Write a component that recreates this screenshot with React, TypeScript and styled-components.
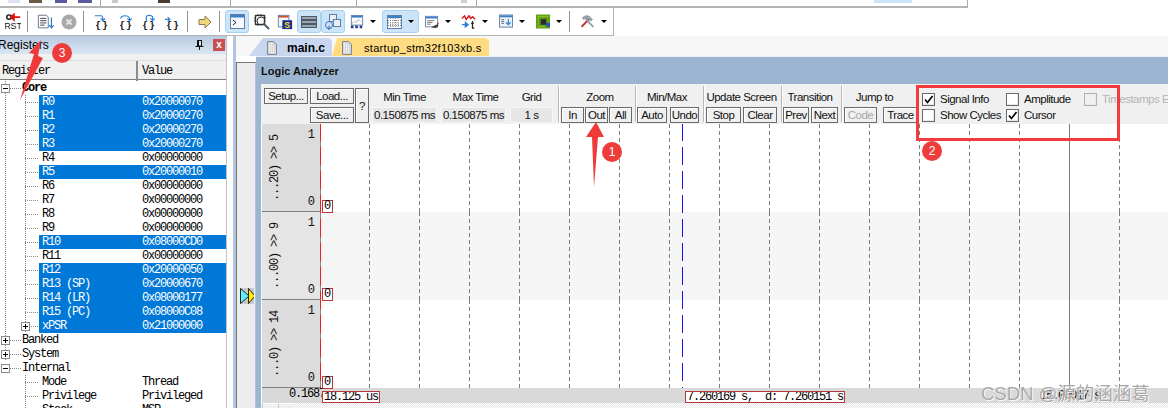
import styled, { createGlobalStyle } from "styled-components";

const GlobalStyle = createGlobalStyle`
  html, body {
    margin: 0;
    background: #fff;
  }
`;

const ui = `"Liberation Sans", Arial, sans-serif`;
const mono = `"Liberation Mono", "Courier New", monospace`;

const Page = styled.div`
  position: relative;
  width: 1168px;
  height: 408px;
  overflow: hidden;
  display: flex;
  flex-direction: column;
  background: #fff;
  font-family: ${ui};
`;

/* ---------- top strip: leftovers of the toolbar above ---------- */

const TopStrip = styled.div`
  height: 6px;
  width: 967px;
  flex: none;
  display: flex;
  border-right: 1px solid #aaa;
  border-bottom: 2px solid #b4b4b4;
`;

const Stub = styled.div<{ $ml: number; $w: number; $c: string }>`
  margin-left: ${(p) => p.$ml}px;
  width: ${(p) => p.$w}px;
  height: 3px;
  background: ${(p) => p.$c};
`;

const StubLine = styled.div<{ $ml: number }>`
  margin-left: ${(p) => p.$ml}px;
  width: 1px;
  background: #aaa;
`;

/* ---------- debug toolbar ---------- */

const ToolBar = styled.div`
  width: 613px;
  height: 27px;
  flex: none;
  box-sizing: content-box;
  display: flex;
  align-items: center;
  border-right: 1px solid #b4b4b4;
  border-bottom: 1px solid #b4b4b4;
`;

const Tool = styled.div<{ $w: number; $ml: number; $on?: boolean }>`
  width: ${(p) => p.$w}px;
  margin-left: ${(p) => p.$ml}px;
  height: 23px;
  box-sizing: border-box;
  flex: none;
  display: flex;
  align-items: center;
  justify-content: ${(p) => (p.$on ? "center" : "flex-start")};
  gap: 6px;
  border-radius: 3px;
  background: ${(p) => (p.$on ? "#cce4f7" : "transparent")};
  border: 1px solid ${(p) => (p.$on ? "#a8d2f2" : "transparent")};
`;

const ToolSep = styled.div<{ $ml: number }>`
  width: 1px;
  height: 21px;
  flex: none;
  margin-left: ${(p) => p.$ml}px;
  background: #8e8e8e;
`;

const Caret = styled.span`
  width: 0;
  height: 0;
  flex: none;
  border-left: 3px solid transparent;
  border-right: 3px solid transparent;
  border-top: 3px solid #000;
`;

const Braces = ({ arrow }: { arrow: string }) => (
  <svg width="18" height="18" viewBox="0 0 18 18">
    <text x="9" y="16" textAnchor="middle" fontFamily={mono} fontWeight="700" fontSize="11" letterSpacing="1" fill="#111">
      {"{}"}
    </text>
    <path d={arrow} fill="none" stroke="#2f7fd6" strokeWidth="1.3" />
  </svg>
);

const Win = ({ children }: { children?: React.ReactNode }) => (
  <svg width="17" height="17" viewBox="0 0 17 17">
    <rect x="1.5" y="1.5" width="14" height="14" fill="#f5f8fc" stroke="#5b7fa8" />
    <rect x="2" y="2" width="13" height="2.5" fill="#3f7fc8" />
    {children}
  </svg>
);

const CheckMark = () => (
  <svg width="11" height="11" viewBox="0 0 11 11">
    <path d="M2 5.500l2.500 3 5-6.500" fill="none" stroke="#000" strokeWidth="1.700" />
  </svg>
);

/* ---------- main split ---------- */

const Main = styled.div`
  flex: 1;
  min-height: 0;
  display: flex;
`;

const RegisterPanel = styled.div`
  width: 226px;
  flex: none;
  display: flex;
  flex-direction: column;
  overflow: hidden;
  border-right: 1px solid #c4c4c4;
`;

const PanelHead = styled.div`
  height: 18px;
  flex: none;
  display: flex;
  align-items: center;
  background: linear-gradient(#b7cadf, #dbe6f2);
  font-size: 12px;
  color: #000;
`;

const PanelTitle = styled.span`
  margin-left: -2px;
  flex: 1;
`;

const CloseBtn = styled.span`
  width: 12px;
  height: 12px;
  margin: 0 1px 0 9px;
  background: #c75050;
  color: #fff;
  font-size: 10px;
  font-weight: 700;
  line-height: 11px;
  text-align: center;
`;

const PanelGap = styled.div`
  height: 6px;
  flex: none;
  background: #f0f0f0;
`;

const TableHead = styled.div`
  height: 20px;
  flex: none;
  display: grid;
  grid-template-columns: 136px 1fr;
  background: #f0f0f0;
  border-top: 1px solid #dcdcdc;
  border-bottom: 1px solid #7d7d7d;
  box-sizing: border-box;
  font-family: ${mono};
  font-size: 12px;
  letter-spacing: -1.2px;
`;

const HeadCell = styled.div`
  padding-left: 2px;
  line-height: 20px;
  & + & {
    border-left: 2px solid #8c8c8c;
    padding-left: 4px;
  }
`;

const Tree = styled.div`
  flex: 1;
  padding-top: 1px;
  min-height: 0;
  font-family: ${mono};
  font-size: 12px;
  letter-spacing: -1.2px;
`;

const dotV = (x: number) =>
  `repeating-linear-gradient(#8a8a8a 0 1px, transparent 1px 2px) ${x}px 0 / 1px 100% no-repeat`;
const dotH = (x: number, w: number) =>
  `repeating-linear-gradient(90deg, #8a8a8a 0 1px, transparent 1px 2px) ${x}px 7px / ${w}px 1px no-repeat`;

const TreeLine = styled.div`
  height: 14px;
  display: flex;
  line-height: 15px;
`;

const Indent = styled.div<{ $level: number; $rail?: boolean }>`
  position: relative;
  flex: none;
  width: ${(p) => (p.$level ? 39 : 22)}px;
  background: ${(p) =>
    [
      p.$level ? dotV(25) : "",
      p.$level ? dotH(25, 14) : dotH(8, 14),
      p.$rail ? dotV(5) : "",
    ]
      .filter(Boolean)
      .join(", ")};
`;

const Expander = styled.span<{ $level: number; $open?: boolean }>`
  position: absolute;
  top: 3px;
  left: ${(p) => (p.$level ? 21 : 1)}px;
  width: 7px;
  height: 7px;
  border: 1px solid #8a8a8a;
  background: #fff;
  &::before {
    content: "";
    position: absolute;
    left: 1px;
    right: 1px;
    top: 3px;
    height: 1px;
    background: #000;
  }
  &::after {
    content: "";
    display: ${(p) => (p.$open ? "none" : "block")};
    position: absolute;
    top: 1px;
    bottom: 1px;
    left: 3px;
    width: 1px;
    background: #000;
  }
`;

const TreeBody = styled.div<{ $sel?: boolean; $bold?: boolean; $wide?: boolean }>`
  flex: none;
  width: ${(p) => (p.$wide ? 204 : 187)}px;
  display: grid;
  grid-template-columns: ${(p) => (p.$wide ? "120px" : "100px")} 1fr;
  box-sizing: border-box;
  padding-left: ${(p) => (p.$wide ? 0 : 3)}px;
  background: ${(p) => (p.$sel ? "#0078d7" : "transparent")};
  color: ${(p) => (p.$sel ? "#fff" : "#000")};
  font-weight: ${(p) => (p.$bold ? 700 : 400)};
  white-space: pre;
`;

/* ---------- workspace ---------- */

const PanelSlit = styled.div`
  width: 9px;
  flex: none;
  box-sizing: border-box;
  background: #fff;
  border-right: 3px solid #b4c4de;
`;

const Workspace = styled.div`
  flex: 1;
  min-width: 0;
  display: flex;
  flex-direction: column;
`;

const TabStrip = styled.div`
  height: 20px;
  flex: none;
  display: flex;
  align-items: flex-end;
  padding-left: 13px;
  background: #f7f7f7;
`;

const Tab = styled.div<{ $bg: string; $w: number; $bold?: boolean; $pad: number; $lead: number; $slant: number }>`
  width: ${(p) => p.$w}px;
  height: 18px;
  box-sizing: border-box;
  flex: none;
  display: flex;
  align-items: center;
  gap: ${(p) => p.$pad}px;
  padding: 2px 0 0 ${(p) => p.$lead}px;
  background: ${(p) => p.$bg};
  clip-path: polygon(0 100%, ${(p) => p.$slant}px 0, calc(100% - 3px) 0, 100% 3px, 100% 100%);
  font-size: ${(p) => (p.$bold ? 12 : 11)}px;
  font-weight: ${(p) => (p.$bold ? 700 : 400)};
  letter-spacing: ${(p) => (p.$bold ? 0 : 0.3)}px;
`;

const DocIcon = () => (
  <svg width="12" height="14" viewBox="0 0 12 14">
    <path d="M1.5 .5h6l3 3v10h-9z" fill="#d8d8d8" stroke="#7d8796" />
    <path d="M3 3h3M3 5h5M3 7h5M3 9h5M3 11h5" stroke="#fff" strokeDasharray="1 1" />
  </svg>
);

const Desk = styled.div`
  flex: 1;
  min-height: 0;
  display: flex;
`;

const Gutter = styled.div`
  width: 20px;
  flex: none;
  box-sizing: border-box;
  margin-top: 6px;
  padding-top: 225px;
  padding-left: 3px;
  background: #ececec;
  border-top: 1px solid #777;
  border-left: 1px solid #777;
  border-right: 1px solid #b4c4de;
`;

const Marker = styled.div`
  width: 14px;
  height: 16px;
  background: #c8c8c8;
  overflow: hidden;
`;

const Analyzer = styled.div`
  flex: 1;
  min-width: 0;
  display: flex;
  flex-direction: column;
  background: #9cb5d0;
  border-top: 1px solid #e8eef5;
  padding-left: 5px;
`;

const TitleBar = styled.div`
  height: 27px;
  flex: none;
  display: flex;
  align-items: center;
  font-size: 11px;
  font-weight: 700;
  color: #111;
`;

const Controls = styled.div`
  height: 40px;
  flex: none;
  display: flex;
  padding-left: 3px;
  background: #f0f0f0;
  white-space: nowrap;
  overflow: hidden;
  font-size: 11.5px;
  letter-spacing: -0.5px;
  color: #111;
`;

const Btn = styled.div<{ $w: number; $h?: number; $off?: boolean }>`
  width: ${(p) => p.$w}px;
  height: ${(p) => p.$h ?? 16}px;
  box-sizing: border-box;
  flex: none;
  display: flex;
  align-items: center;
  justify-content: center;
  border: 1px solid #6a6a6a;
  box-shadow: inset 1px 1px 0 #fff;
  background: #f0f0f0;
  color: ${(p) => (p.$off ? "#a8a8a8" : "#111")};
`;

const FileGroup = styled.div`
  margin-top: 4px;
  display: grid;
  grid-template-columns: 46px 45px 14px;
  grid-template-rows: 16px 16px;
  row-gap: 3px;
`;

const SetupBtn = styled(Btn)`
  grid-column: 1;
  grid-row: 1;
`;

const HelpBtn = styled(Btn)`
  grid-column: 3;
  grid-row: 1 / 3;
`;

const SaveBtn = styled(Btn)`
  grid-column: 2;
  grid-row: 2;
`;

const FieldsGap = styled.div`
  width: 3px;
  flex: none;
`;

const Field = styled.div<{ $w: number; $mr: number }>`
  width: ${(p) => p.$w}px;
  margin-right: ${(p) => p.$mr}px;
  flex: none;
  display: flex;
  flex-direction: column;
`;

const GroupLabel = styled.div<{ $nudge?: number }>`
  height: 23px;
  box-sizing: border-box;
  padding: 7px ${(p) => Math.max(0, -(p.$nudge ?? 0))}px 0 ${(p) => Math.max(0, p.$nudge ?? 0)}px;
  line-height: 13px;
  text-align: center;
`;

const FieldValue = styled.div`
  height: 16px;
  display: flex;
  align-items: center;
  justify-content: center;
  background: #e6e6e6;
  border: 1px solid #f6f6f6;
  box-sizing: border-box;
`;

const Groove = styled.div`
  width: 2px;
  height: 36px;
  flex: none;
  margin-top: 2px;
  border-left: 1px solid #b8b8b8;
  border-right: 1px solid #fff;
  box-sizing: border-box;
`;

const Group = styled.div<{ $w: number; $pl?: number }>`
  width: ${(p) => p.$w}px;
  box-sizing: border-box;
  padding-left: ${(p) => p.$pl ?? 0}px;
  flex: none;
  display: flex;
  flex-direction: column;
`;

const BtnRow = styled.div<{ $gap: number }>`
  display: flex;
  gap: ${(p) => p.$gap}px;
`;

const Options = styled.div`
  flex: none;
  margin: 7px 0 0 3px;
  display: grid;
  grid-template-columns: 84px 78px auto;
  grid-auto-rows: 16px;
`;

const Option = styled.div<{ $off?: boolean }>`
  display: flex;
  align-items: center;
  gap: 5px;
  color: ${(p) => (p.$off ? "#b4b4b4" : "#111")};
`;

const Check = styled.span<{ $off?: boolean }>`
  width: 13px;
  height: 13px;
  flex: none;
  box-sizing: border-box;
  display: flex;
  border: 1px solid ${(p) => (p.$off ? "#b0b0b0" : "#6a6a6a")};
  background: ${(p) => (p.$off ? "#f0f0f0" : "#fff")};
  box-shadow: inset -1px -1px 0 #e8e8e8;
`;

/* ---------- signal rows ---------- */

const Signals = styled.div`
  flex: 1;
  min-height: 0;
  display: flex;
  flex-direction: column;
  background: #fff;
`;

const SignalRow = styled.div<{ $h: number; $alt?: boolean }>`
  height: ${(p) => p.$h}px;
  flex: none;
  display: flex;
  position: relative;
  background: ${(p) => (p.$alt ? "#f5f5f5" : "#fff")};
`;

const LabelCell = styled.div<{ $alt?: boolean }>`
  width: 58px;
  margin-left: 1px;
  flex: none;
  box-sizing: border-box;
  display: flex;
  justify-content: space-between;
  padding: 4px 5px 2px 6px;
  background: ${(p) => (p.$alt ? "#e5e5e5" : "#dcdcdc")};
  border-bottom: 1px solid #808080;
  color: #111;
`;

const SigName = styled.div`
  writing-mode: vertical-rl;
  transform: rotate(180deg);
  align-self: center;
  font-family: ${mono};
  font-size: 12px;
  letter-spacing: -1.200px;
  white-space: pre;
`;

const Scale = styled.div`
  display: flex;
  flex-direction: column;
  justify-content: space-between;
  font-family: ${mono};
  font-size: 12px;
`;

const RedEdge = styled.div<{ $top: number }>`
  width: 1px;
  flex: none;
  background: repeating-linear-gradient(#ee1c25 0 18px, #8a8a8a 18px 24px) 0 ${(p) => -p.$top}px / 1px 600px no-repeat;
`;

const Plot = styled.svg`
  flex: none;
`;

const ZeroTag = styled.span`
  position: absolute;
  left: 61px;
  bottom: -1px;
  width: 11px;
  height: 13px;
  box-sizing: border-box;
  z-index: 1;
  background: #fff;
  border: 1px solid #b5383c;
  font-family: ${mono};
  font-size: 12px;
  line-height: 11px;
  text-align: center;
`;

const TimeBar = styled.div`
  height: 15px;
  flex: none;
  display: flex;
  align-items: flex-end;
  margin-left: 1px;
  background: #d9d9d9;
  font-family: ${mono};
  font-size: 12px;
  letter-spacing: -1.2px;
  white-space: pre;
`;

const TimeStart = styled.div`
  width: 60px;
  height: 15px;
  box-sizing: border-box;
  flex: none;
  overflow: hidden;
  padding-left: 27px;
  line-height: 12px;
`;

const TimeBox = styled.div<{ $w: number; $ml: number }>`
  width: ${(p) => p.$w}px;
  margin-left: ${(p) => p.$ml}px;
  height: 12px;
  box-sizing: border-box;
  flex: none;
  background: #fff;
  border: 1px solid #b5383c;
  line-height: 11px;
  padding-left: 1px;
  overflow: hidden;
`;

const TimeEnd = styled.div`
  margin-left: 195px;
  line-height: 13px;
`;

const ScrollTrack = styled.div`
  height: 5px;
  flex: none;
  display: flex;
  background: repeating-conic-gradient(#e6e6e6 0 25%, #fff 0 50%) 0 0 / 2px 2px;
`;

const ScrollBtn = styled.div`
  width: 14px;
  margin-left: 1px;
  background: #f0f0f0;
  border-top: 1px solid #fff;
  border-left: 1px solid #c8c8c8;
`;

/* ---------- annotations drawn over the screenshot ---------- */

const Callout = styled.span<{ $x: number; $y: number }>`
  position: absolute;
  left: ${(p) => p.$x - 10}px;
  top: ${(p) => p.$y - 10}px;
  width: 20px;
  height: 20px;
  border-radius: 50%;
  background: #ee3b3b;
  color: #fff;
  font-size: 12px;
  line-height: 20px;
  text-align: center;
  z-index: 3;
`;

const RedFrame = styled.div`
  position: absolute;
  left: 916px;
  top: 85px;
  width: 204px;
  height: 56px;
  box-sizing: border-box;
  border: 3px solid #f23a3f;
  z-index: 2;
`;

const ArrowLayer = styled.svg`
  position: absolute;
  left: 0;
  top: 0;
  z-index: 2;
`;

const Watermark = styled.div`
  position: absolute;
  left: 981px;
  top: 379px;
  z-index: 3;
  font-family: "Liberation Sans", "Noto Sans CJK SC", sans-serif;
  font-size: 18.5px;
  color: rgba(145, 145, 145, 0.8);
  text-shadow: 0 0 1px #fff, 1px 1px 0 rgba(255, 255, 255, 0.8);
  white-space: nowrap;
`;

/* ---------- data ---------- */

type Reg = { name: string; value: string; sel?: boolean; plus?: boolean };

const core: Reg[] = [
  { name: "R0", value: "0x20000070", sel: true },
  { name: "R1", value: "0x20000270", sel: true },
  { name: "R2", value: "0x20000270", sel: true },
  { name: "R3", value: "0x20000270", sel: true },
  { name: "R4", value: "0x00000000" },
  { name: "R5", value: "0x20000010", sel: true },
  { name: "R6", value: "0x00000000" },
  { name: "R7", value: "0x00000000" },
  { name: "R8", value: "0x00000000" },
  { name: "R9", value: "0x00000000" },
  { name: "R10", value: "0x08000CD0", sel: true },
  { name: "R11", value: "0x00000000" },
  { name: "R12", value: "0x20000050", sel: true },
  { name: "R13 (SP)", value: "0x20000670", sel: true },
  { name: "R14 (LR)", value: "0x08000177", sel: true },
  { name: "R15 (PC)", value: "0x08000C08", sel: true },
  { name: "xPSR", value: "0x21000000", sel: true, plus: true },
];

const internal: Reg[] = [
  { name: "Mode", value: "Thread" },
  { name: "Privilege", value: "Privileged" },
  { name: "Stack", value: "MSP" },
];

const gridX = Array.from({ length: 16 }, (_, i) => i).filter((i) => i !== 14).map((i) => 48.5 + i * 50);

const PlotArt = ({ h, top }: { h: number; top: number }) => (
  <Plot width="848" height={h}>
    {gridX.map((x) => (
      <line key={x} x1={x} x2={x} y1="0" y2={h} stroke="#7d7d7d" strokeDasharray="4 3" />
    ))}
    <line x1="748.5" x2="748.5" y1="0" y2={h} stroke="#7a7a7a" />
    <line x1="361.5" x2="361.5" y1="0" y2={h} stroke="#1414e6" strokeDasharray="18 6" strokeDashoffset={top} />
  </Plot>
);

const Root = ({ label, rail, open }: { label: string; rail?: boolean; open?: boolean }) => (
  <TreeLine>
    <Indent $level={0} $rail={rail}>
      <Expander $level={0} $open={open} />
    </Indent>
    <TreeBody $wide $bold={label === "Core"}>
      <span>{label}</span>
    </TreeBody>
  </TreeLine>
);

const RegLine = ({ r, rail }: { r: Reg; rail?: boolean }) => (
  <TreeLine>
    <Indent $level={1} $rail={rail}>
      {r.plus && <Expander $level={1} />}
    </Indent>
    <TreeBody $sel={r.sel}>
      <span>{r.name}</span>
      <span>{r.value}</span>
    </TreeBody>
  </TreeLine>
);

const signals = [
  { name: "...20) >> 5", h: 88, top: 1 },
  { name: "...00) >> 9", h: 88, top: 89, alt: true },
  { name: "...0) >> 14", h: 88, top: 177 },
];

export default function App() {
  return (
    <Page>
      <GlobalStyle />
      <TopStrip>
        <Stub $ml={8} $w={12} $c="#dfe3f2" />
        <Stub $ml={9} $w={13} $c="#6b5a45" />
        <Stub $ml={13} $w={12} $c="#5a5aa0" />
        <Stub $ml={11} $w={14} $c="#5a5aa0" />
        <StubLine $ml={8} />
        <Stub $ml={11} $w={6} $c="#c8c8c8" />
        <Stub $ml={40} $w={12} $c="#4a3a30" />
        <StubLine $ml={60} />
        <StubLine $ml={125} />
        <Stub $ml={104} $w={6} $c="#d8cfc0" />
        <StubLine $ml={9} />
        <Stub $ml={397} $w={38} $c="#cce4f7" />
      </TopStrip>
      <ToolBar>
        <Tool $w={18} $ml={4}>
          <svg width="18" height="20" viewBox="0 0 18 20">
            <circle cx="4.5" cy="4.5" r="2.5" fill="none" stroke="#111" strokeWidth="1.6" />
            <path d="M17 4.5H10M10 1.5L6.5 4.5 10 7.5z" stroke="#e01010" strokeWidth="2" fill="#e01010" />
            <text x="9" y="18" textAnchor="middle" fontFamily={ui} fontSize="10" fill="#111">RST</text>
          </svg>
        </Tool>
        <ToolSep $ml={5} />
        <Tool $w={20} $ml={8}>
          <svg width="20" height="18" viewBox="0 0 20 18">
            <path d="M1.5 1.5h9l2 2v12h-11z" fill="#fff" stroke="#5b6b80" />
            <path d="M3.5 5h7M3.5 7.5h7M3.5 10h7M3.5 12.5h5" stroke="#333" />
            <path d="M16 4v11M13.5 12.5L16 15.5l2.5-3" fill="none" stroke="#2f7fd6" strokeWidth="1.4" />
          </svg>
        </Tool>
        <Tool $w={18} $ml={4}>
          <svg width="16" height="16" viewBox="0 0 16 16">
            <circle cx="8" cy="8" r="7.5" fill="#a9a9a9" />
            <path d="M5.5 5.5l5 5M10.5 5.5l-5 5" stroke="#e8e8e8" strokeWidth="1.8" />
          </svg>
        </Tool>
        <ToolSep $ml={5} />
        <Tool $w={18} $ml={9}><Braces arrow="M1 2h7c2 0 2 2 2 5M7.5 5L10 7.5 12.5 5" /></Tool>
        <Tool $w={18} $ml={6}><Braces arrow="M3 5C3 1 12 1 13 5v2M10.500 5L13 7.5 15.5 5" /></Tool>
        <Tool $w={18} $ml={5}><Braces arrow="M6 9V3c0-2 6-2 7 0v4M10.5 5L13 7.5 15.5 5" /></Tool>
        <Tool $w={18} $ml={6}><Braces arrow="M0 6h5M3 3.5L5.5 6 3 8.5" /></Tool>
        <ToolSep $ml={5} />
        <Tool $w={16} $ml={9}>
          <svg width="14" height="14" viewBox="0 0 14 14">
            <path d="M1 4.5h6V1l6 6-6 6V9.5H1z" fill="#f0d878" stroke="#8a7a50" />
          </svg>
        </Tool>
        <ToolSep $ml={6} />
        <Tool $w={24} $ml={5} $on>
          <Win><path d="M4 7l3 2.5L4 12" fill="none" stroke="#222" /></Win>
        </Tool>
        <Tool $w={20} $ml={3}>
          <svg width="18" height="18" viewBox="0 0 18 18">
            <rect x="2.5" y="2.5" width="9" height="9" fill="#fff" stroke="#333" strokeWidth="1.4" />
            <path d="M1 5h2M1 8h2M11 5h2M5 1v2M8 1v2M5 11v2" stroke="#333" />
            <circle cx="8" cy="8" r="4" fill="none" stroke="#333" />
            <path d="M11 11l5 5" stroke="#4a5a70" strokeWidth="2" />
          </svg>
        </Tool>
        <Tool $w={18} $ml={4}>
          <svg width="18" height="18" viewBox="0 0 18 18">
            <rect x="1.5" y="1.5" width="12" height="13" fill="#f5f8fc" stroke="#5b7fa8" />
            <rect x="2" y="2" width="11" height="2" fill="#d05030" />
            <rect x="6" y="7" width="11" height="10" fill="#1a2a9a" />
            <text x="11.5" y="16" textAnchor="middle" fontFamily={ui} fontWeight="700" fontSize="10" fill="#ffe000">S</text>
          </svg>
        </Tool>
        <Tool $w={24} $ml={3} $on>
          <svg width="16" height="14" viewBox="0 0 16 14">
            <rect x=".5" y="1.5" width="15" height="3" fill="#9aa5b4" stroke="#4f5866" />
            <rect x=".5" y="5.5" width="15" height="3" fill="#9aa5b4" stroke="#4f5866" />
            <rect x=".5" y="9.5" width="15" height="3" fill="#9aa5b4" stroke="#4f5866" />
          </svg>
        </Tool>
        <Tool $w={24} $ml={0} $on>
          <svg width="18" height="18" viewBox="0 0 18 18">
            <rect x="5.5" y="1.5" width="7" height="7" fill="#e8eef6" stroke="#5b7fa8" />
            <rect x="9.5" y="6.5" width="7" height="7" fill="#e8eef6" stroke="#5b7fa8" />
            <circle cx="5" cy="12" r="3.5" fill="#cfe0f4" stroke="#3f7fc8" />
            <path d="M5 16.5v-4M3 14.5l2 2 2-2" fill="none" stroke="#2f6fc0" />
          </svg>
        </Tool>
        <Tool $w={28} $ml={4}>
          <svg width="16" height="18" viewBox="0 0 16 18">
            <rect x="1.5" y="1.5" width="13" height="11" fill="#fff" stroke="#5b7fa8" />
            <rect x="2" y="2" width="12" height="2" fill="#3f7fc8" />
            <path d="M2 11l3-3 2 2 3-4 3 3" fill="none" stroke="#555" strokeDasharray="1 1" />
            <path d="M1 16h3v-3H1zM6 16h3v-3H6zM11 16h3v-3h-3z" fill="#22408a" />
          </svg>
          <Caret />
        </Tool>
        <Tool $w={37} $ml={5} $on>
          <svg width="15" height="14" viewBox="0 0 15 14">
            <rect x=".5" y=".5" width="14" height="13" fill="#fff" stroke="#5b7fa8" />
            <rect x="1" y="1" width="13" height="2" fill="#3f7fc8" />
            <path d="M1 5.5h13M1 8h13M1 10.5h13M3.5 3v10M6 3v10M8.5 3v10M11 3v10" stroke="#8a8a8a" strokeDasharray="1 1" />
          </svg>
          <Caret />
        </Tool>
        <Tool $w={28} $ml={5}>
          <svg width="16" height="16" viewBox="0 0 16 16">
            <rect x=".5" y="1.5" width="14" height="12" fill="#fff" stroke="#5b7fa8" />
            <rect x="1" y="2" width="13" height="2" fill="#3f7fc8" />
            <path d="M2.5 6.5h8M2.5 8.5h6M2.5 10.5h4" stroke="#666" />
            <path d="M7 14l8-4v3l-3 2z" fill="#444" />
            <path d="M14 8l2 2-2 1z" fill="#c03030" />
          </svg>
          <Caret />
        </Tool>
        <Tool $w={29} $ml={8}>
          <svg width="17" height="18" viewBox="0 0 17 18">
            <path d="M1 5l3-3 2 4 3-4 2 3 2-2 3 3" fill="none" stroke="#d01818" strokeWidth="1.6" />
            <path d="M1 12h6M5 9.5l3 2.5-3 2.5z" stroke="#2f7fd6" strokeWidth="1.6" fill="#2f7fd6" />
            <path d="M13 8v8h2M11.5 10.5h3" fill="none" stroke="#222" strokeWidth="1.4" />
          </svg>
          <Caret />
        </Tool>
        <Tool $w={28} $ml={9}>
          <svg width="15" height="15" viewBox="0 0 15 15">
            <rect x=".5" y=".5" width="14" height="13" fill="#edf2f8" stroke="#5b7fa8" />
            <rect x="1" y="1" width="13" height="2" fill="#3f7fc8" />
            <path d="M2.5 5.5h3M2.5 7.5h3M2.5 9.5h3" stroke="#666" />
            <path d="M10 5v6M7.5 8.5L10 11l2.5-2.5" fill="none" stroke="#2f7fd6" strokeWidth="1.3" />
          </svg>
          <Caret />
        </Tool>
        <Tool $w={28} $ml={9}>
          <svg width="15" height="15" viewBox="0 0 15 15">
            <rect width="15" height="15" fill="#5fa012" />
            <rect x="5" y="5" width="6" height="6" fill="#2a2a2a" />
            <path d="M2 2h11M2 4h2M2 7h2M2 10h2M2 13h7" stroke="#d8e060" strokeDasharray="1 1" />
            <rect x="11" y="9" width="4" height="4" fill="#1a50c0" />
          </svg>
          <Caret />
        </Tool>
        <ToolSep $ml={6} />
        <Tool $w={29} $ml={9}>
          <svg width="18" height="17" viewBox="0 0 18 17">
            <path d="M2 15L11 5" stroke="#c03030" strokeWidth="2.4" />
            <path d="M16 15L7 6" stroke="#909aa4" strokeWidth="2" />
            <path d="M3 4C6 1 10 1 12 3l3 3-2 2-3-2-3-1-3 1z" fill="#9aa5b0" stroke="#667" strokeWidth=".6" />
          </svg>
          <Caret />
        </Tool>
      </ToolBar>
      <Main>
        <RegisterPanel>
          <PanelHead>
            <PanelTitle>Registers</PanelTitle>
            <svg width="9" height="10" viewBox="0 0 9 10">
              <path d="M2 0h5v6h1.5v1h-3.500v3h-1V7H.5V6H2z" fill="#111" />
              <path d="M4 1h2v4.500H4z" fill="#dbe6f2" />
            </svg>
            <CloseBtn>x</CloseBtn>
          </PanelHead>
          <PanelGap />
          <TableHead>
            <HeadCell>Register</HeadCell>
            <HeadCell>Value</HeadCell>
          </TableHead>
          <Tree>
            <Root label="Core" rail open />
            {core.map((r) => (
              <RegLine key={r.name} r={r} rail />
            ))}
            <Root label="Banked" rail />
            <Root label="System" rail />
            <Root label="Internal" open />
            {internal.map((r) => (
              <RegLine key={r.name} r={r} />
            ))}
          </Tree>
        </RegisterPanel>
        <PanelSlit />
        <Workspace>
          <TabStrip>
            <Tab $bg="#c8d6f0" $w={83} $bold $pad={9} $lead={17} $slant={14}>
              <DocIcon />
              main.c
            </Tab>
            <Tab $bg="#ffdc82" $w={157} $pad={11} $lead={9} $slant={5}>
              <DocIcon />
              startup_stm32f103xb.s
            </Tab>
          </TabStrip>
          <Desk>
            <Gutter>
              <Marker>
                <svg width="14" height="16" viewBox="0 0 14 16">
                  <path d="M.5 .5L9 8 .5 15.500z" fill="#5ff0ff" stroke="#222" />
                  <path d="M8.500 .5L15 8l-6.500 7.500z" fill="#ffee00" stroke="#222" />
                </svg>
              </Marker>
            </Gutter>
            <Analyzer>
              <TitleBar>Logic Analyzer</TitleBar>
              <Controls>
                <FileGroup>
                  <SetupBtn $w={44}>Setup...</SetupBtn>
                  <Btn $w={44}>Load...</Btn>
                  <HelpBtn $w={14} $h={35}>?</HelpBtn>
                  <SaveBtn $w={44}>Save...</SaveBtn>
                </FileGroup>
                <FieldsGap />
                <Field $w={65} $mr={4}>
                  <GroupLabel>Min Time</GroupLabel>
                  <FieldValue>0.150875 ms</FieldValue>
                </Field>
                <Field $w={65} $mr={4}>
                  <GroupLabel $nudge={4}>Max Time</GroupLabel>
                  <FieldValue>0.150875 ms</FieldValue>
                </Field>
                <Field $w={43} $mr={5}>
                  <GroupLabel>Grid</GroupLabel>
                  <FieldValue>1 s</FieldValue>
                </Field>
                <Groove />
                <Group $w={75} $pl={1}>
                  <GroupLabel $nudge={4}>Zoom</GroupLabel>
                  <BtnRow $gap={1}>
                    <Btn $w={23}>In</Btn>
                    <Btn $w={23}>Out</Btn>
                    <Btn $w={23}>All</Btn>
                  </BtnRow>
                </Group>
                <Groove />
                <Group $w={66}>
                  <GroupLabel $nudge={-6}>Min/Max</GroupLabel>
                  <BtnRow $gap={3}>
                    <Btn $w={30}>Auto</Btn>
                    <Btn $w={29}>Undo</Btn>
                  </BtnRow>
                </Group>
                <Groove />
                <Group $w={76} $pl={1}>
                  <GroupLabel $nudge={-4}>Update Screen</GroupLabel>
                  <BtnRow $gap={2}>
                    <Btn $w={35}>Stop</Btn>
                    <Btn $w={34}>Clear</Btn>
                  </BtnRow>
                </Group>
                <Groove />
                <Group $w={58}>
                  <GroupLabel $nudge={-4}>Transition</GroupLabel>
                  <BtnRow $gap={2}>
                    <Btn $w={26}>Prev</Btn>
                    <Btn $w={27}>Next</Btn>
                  </BtnRow>
                </Group>
                <Groove />
                <Group $w={76} $pl={1}>
                  <GroupLabel $nudge={-14}>Jump to</GroupLabel>
                  <BtnRow $gap={6}>
                    <Btn $w={33} $off>Code</Btn>
                    <Btn $w={35}>Trace</Btn>
                  </BtnRow>
                </Group>
                <Options>
                  <Option><Check><CheckMark /></Check>Signal Info</Option>
                  <Option><Check />Amplitude</Option>
                  <Option $off><Check $off />Timestamps E</Option>
                  <Option><Check />Show Cycles</Option>
                  <Option><Check><CheckMark /></Check>Cursor</Option>
                </Options>
              </Controls>
              <Signals>
                {signals.map((s) => (
                  <SignalRow key={s.name} $h={s.h} $alt={s.alt}>
                    <LabelCell $alt={s.alt}>
                      <SigName>{s.name}</SigName>
                      <Scale>
                        <span>1</span>
                        <span>0</span>
                      </Scale>
                    </LabelCell>
                    <RedEdge $top={s.top} />
                    <PlotArt h={s.h} top={s.top} />
                    <ZeroTag>0</ZeroTag>
                  </SignalRow>
                ))}
                <TimeBar>
                  <TimeStart>0.1687</TimeStart>
                  <TimeBox $w={58} $ml={0}>18.125 us</TimeBox>
                  <TimeBox $w={160} $ml={305}>7.260169 s,  d: 7.260151 s</TimeBox>
                  <TimeEnd>15.00017 s</TimeEnd>
                </TimeBar>
                <ScrollTrack>
                  <ScrollBtn />
                  <ScrollBtn />
                </ScrollTrack>
              </Signals>
            </Analyzer>
          </Desk>
        </Workspace>
      </Main>

      <ArrowLayer width="1168" height="408" viewBox="0 0 1168 408">
        <path d="M41 40L29 53 34 54 20 100 43 58 38 56z" fill="#f03a3a" />
        <path d="M596 122L586 137 592 137 594 187 598 137 604 137z" fill="#f03a3a" />
      </ArrowLayer>
      <RedFrame />
      <Callout $x={62} $y={53}>3</Callout>
      <Callout $x={612} $y={152}>1</Callout>
      <Callout $x={932} $y={151}>2</Callout>
      <Watermark>CSDN @源的涵涵葛</Watermark>
    </Page>
  );
}
